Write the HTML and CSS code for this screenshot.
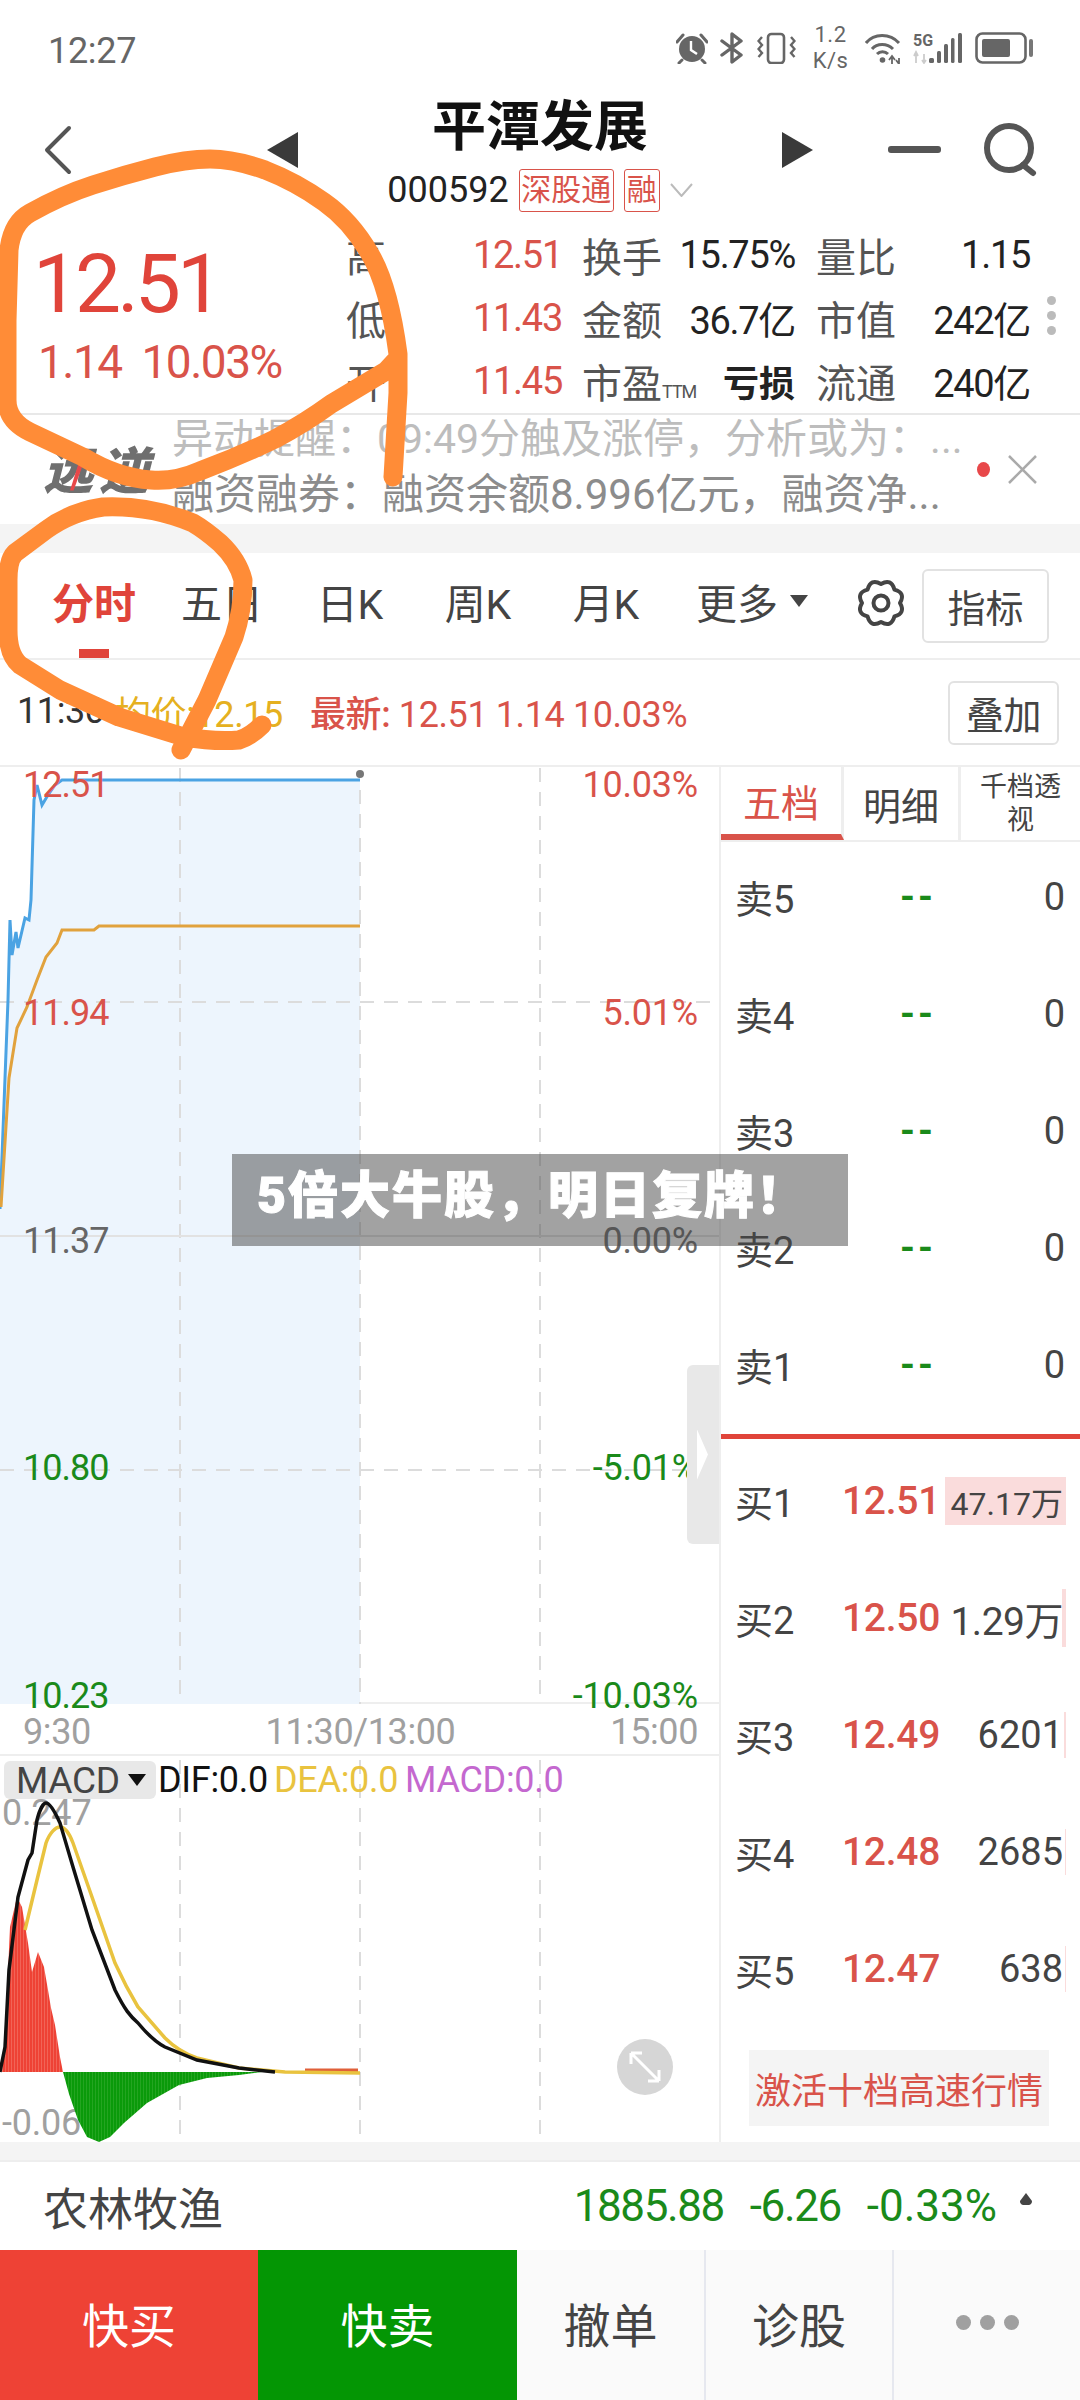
FILE: index.html
```html
<!DOCTYPE html>
<html lang="zh-CN">

<head>
  <meta charset="UTF-8" />
  <meta name="viewport" content="width=device-width, initial-scale=1.0" />
  <title>平潭发展</title>
  <link rel="stylesheet" href="styles.css">
</head>

<body>
  <div class="page">
    <div class="status">
      <span class="time">12:27</span>
      <div class="status-icons">
        <svg width="32" height="31" viewBox="0 0 32 31">
          <path d="M1 9 L7 2 M25 2 L31 9 M6 27 L3 30 M26 27 L29 30" stroke="#666" stroke-width="3" stroke-linecap="round" />
          <circle cx="16" cy="16" r="13" fill="#666" />
          <path d="M15 8 V17 L21 21" fill="none" stroke="#fff" stroke-width="2.4" />
        </svg>
        <svg width="25" height="32" viewBox="0 0 25 32">
          <path d="M2 9 L21 23 L12 30 V2 L21 9 L2 23" fill="none" stroke="#666" stroke-width="3.4" stroke-linejoin="round" stroke-linecap="round" />
        </svg>
        <svg width="39" height="32" viewBox="0 0 39 32">
          <rect x="11" y="2" width="16" height="29" rx="3.5" fill="none" stroke="#666" stroke-width="2.6" />
          <path d="M5 5 L1.5 9 L5 13 L1.5 17 L5 21 L1.5 25 M34 5 L37.5 9 L34 13 L37.5 17 L34 21 L37.5 25" fill="none" stroke="#666" stroke-width="2.4" />
        </svg>
        <div class="speed"><span>1.2</span><span>K/s</span></div>
        <svg width="36" height="32" viewBox="0 0 36 32">
          <path d="M1 11 C9 1 25 1 34 11 M7 17 C12 11 22 11 28 17 M12 22 C15 19 20 19 23 22" fill="none" stroke="#666" stroke-width="3" />
          <circle cx="17.5" cy="28" r="2.8" fill="#666" />
          <path d="M27 24 V32 M34 26 V32 M24 28 L27 24 L30 28 M31 28 L34 32" fill="none" stroke="#666" stroke-width="1.8" />
        </svg>
        <svg width="50" height="32" viewBox="0 0 50 32">
          <text x="0" y="14" class="net-text">5G</text>
          <path d="M3 20 V31 M11 22 V31 M1 24 L3 20 L5 24 M9 28 L11 31 L13 28" fill="none" stroke="#ccc" stroke-width="1.8" />
          <rect x="16" y="26" width="5" height="5" rx="1.5" fill="#666" />
          <rect x="24" y="19" width="4" height="12" rx="1.5" fill="#666" />
          <rect x="31" y="12" width="4" height="19" rx="1.5" fill="#666" />
          <rect x="38" y="6" width="3.5" height="25" rx="1.5" fill="#666" />
          <rect x="45" y="1" width="4" height="30" rx="1.5" fill="#666" />
        </svg>
        <svg width="58" height="32" viewBox="0 0 58 32">
          <rect x="1.5" y="1.5" width="49" height="29" rx="6" fill="none" stroke="#666" stroke-width="2.6" />
          <rect x="7" y="7" width="28" height="18" rx="2" fill="#666" />
          <rect x="54" y="7" width="4" height="18" rx="2" fill="#777" />
        </svg>
      </div>
    </div>

    <div class="head">
      <svg class="back" width="29" height="50" viewBox="0 0 29 50">
        <path d="M26 3 L4 25 L26 47" fill="none" stroke="#555" stroke-width="4" stroke-linecap="round" stroke-linejoin="round" />
      </svg>
      <span class="tri-left"></span>
      <div class="head-center">
        <div class="stock-name">平潭发展</div>
        <div class="stock-code">
          <span class="code-num">000592</span>
          <span class="tag tag-wide">深股通</span>
          <span class="tag">融</span>
          <svg width="23" height="14" viewBox="0 0 23 14">
            <path d="M1 1 L11.5 13 L22 1" fill="none" stroke="#bbb" stroke-width="2" />
          </svg>
        </div>
      </div>
      <span class="tri-right"></span>
      <span class="minus"></span>
      <svg class="search" width="54" height="54" viewBox="0 0 54 54">
        <circle cx="26" cy="25" r="22" fill="none" stroke="#555" stroke-width="6" />
        <path d="M40 42 L50 50" stroke="#555" stroke-width="6" stroke-linecap="round" />
      </svg>
    </div>

    <div class="quote">
      <div class="quote-main">
        <div class="quote-price">12.51</div>
        <div class="quote-change">1.14&nbsp;&nbsp;10.03%</div>
      </div>
      <div class="stats">
        <span class="stat-label">高</span><span class="stat-up">12.51</span>
        <span class="stat-label">换手</span><span class="stat-val">15.75%</span>
        <span class="stat-label">量比</span><span class="stat-val">1.15</span>

        <span class="stat-label">低</span><span class="stat-up">11.43</span>
        <span class="stat-label">金额</span><span class="stat-val">36.7亿</span>
        <span class="stat-label">市值</span><span class="stat-val">242亿</span>

        <span class="stat-label">开</span><span class="stat-up">11.45</span>
        <span class="stat-label">市盈<small class="ttm">TTM</small></span><span class="stat-val stat-bold">亏损</span>
        <span class="stat-label">流通</span><span class="stat-val">240亿</span>
      </div>
      <div class="more-dots"><i></i><i></i><i></i></div>
    </div>

    <div class="news">
      <div class="news-logo">远逆</div>
      <div class="news-text">
        <div class="news-line news-faded">异动提醒：09:49分触及涨停，分析或为：...</div>
        <div class="news-line">融资融券：融资余额8.996亿元，融资净...</div>
      </div>
      <span class="news-dot"></span>
      <svg width="31" height="31" viewBox="0 0 31 31">
        <path d="M2 2 L29 29 M29 2 L2 29" stroke="#aaa" stroke-width="2.5" />
      </svg>
    </div>

    <div class="gap gap-top"></div>

    <div class="tabs">
      <span class="tab tab-active">分时</span>
      <span class="tab">五日</span>
      <span class="tab">日K</span>
      <span class="tab">周K</span>
      <span class="tab">月K</span>
      <span class="tab tab-more">更多<i class="caret"></i></span>
      <svg class="gear" width="52" height="52" viewBox="0 0 52 52" fill="none" stroke="#444" stroke-width="4" stroke-linejoin="round">
        <circle cx="26" cy="26" r="7.5" />
        <path d="M26 7 Q36.3 1.1 39.4 12.6 Q50.9 15.7 45 26 Q50.9 36.3 39.4 39.4 Q36.3 50.9 26 45 Q15.7 50.9 12.6 39.4 Q1.1 36.3 7 26 Q1.1 15.7 12.6 12.6 Q15.7 1.1 26 7 Z" />
      </svg>
      <span class="outline-btn tab-btn">指标</span>
    </div>

    <div class="info">
      <span class="info-time">11:30</span>
      <span class="info-avg">均价:12.15</span>
      <span class="info-last"><b>最新:</b> 12.51 1.14 10.03%</span>
      <span class="outline-btn info-btn">叠加</span>
    </div>

    <div class="main">
      <div class="chart-col">
        <div class="plot">
          <svg class="plot-svg" width="719" height="937" viewBox="0 0 719 937">
            <g transform="translate(0,-767)">
              <path d="M0 1209 L8 1000 L10 920 L12 955 L16 932 L18 948 L25 918 L29 920 L31 900 L34 800 L37 785 L42 805 L48 795 L55 785 L62 780 L360 780 V1704 H0 Z" fill="#edf5fd" />
              <path d="M180 768 V1704 M360 790 V1704 M540 768 V1704 M0 1002 H720 M0 1470 H720" stroke="#dcdcdc" stroke-width="2" stroke-dasharray="14 10" fill="none" />
              <path d="M0 1236 H720" stroke="#e2e2e2" stroke-width="2" fill="none" />
              <path d="M0 1209 L8 1000 L10 920 L12 955 L16 932 L18 948 L25 918 L29 920 L31 900 L34 800 L37 785 L42 805 L48 795 L55 785 L62 780 L360 780" fill="none" stroke="#4ba3e3" stroke-width="3" />
              <path d="M1 1207 L9 1078 L17 1028 L27 1007 L37 980 L46 957 L57 943 L62 930 L94 930 L99 926 L360 926" fill="none" stroke="#e1a23d" stroke-width="3" />
              <circle cx="360" cy="774" r="4" fill="#777" />
            </g>
          </svg>
          <div class="axis">
            <div class="axis-row up"><span>12.51</span><span>10.03%</span></div>
            <div class="axis-row up"><span>11.94</span><span>5.01%</span></div>
            <div class="axis-row flat"><span>11.37</span><span>0.00%</span></div>
            <div class="axis-row down"><span>10.80</span><span>-5.01%</span></div>
            <div class="axis-row down"><span>10.23</span><span>-10.03%</span></div>
          </div>
          <div class="drawer"><i></i></div>
        </div>
        <div class="time-axis">
          <span>9:30</span><span>11:30/13:00</span><span>15:00</span>
        </div>
        <div class="macd">
          <span class="macd-max">0.247</span>
          <span class="macd-min">-0.06</span>
          <svg class="macd-svg" width="719" height="386" viewBox="0 0 719 386">
            <defs>
              <pattern id="redBars" width="3" height="10" patternUnits="userSpaceOnUse">
                <rect width="3" height="10" fill="#f47a6e" />
                <rect width="2.4" height="10" fill="#ee4235" />
              </pattern>
              <pattern id="greenBars" width="3" height="10" patternUnits="userSpaceOnUse">
                <rect width="3" height="10" fill="#35ad30" />
                <rect width="2.4" height="10" fill="#0a9a0a" />
              </pattern>
            </defs>
            <g transform="translate(0,-1756)">
              <path d="M180 1760 V2142 M360 1760 V2142 M540 1760 V2142" stroke="#dcdcdc" stroke-width="2" stroke-dasharray="14 10" fill="none" />
              <path d="M2 2072 L5 2033 L7 1993 L10 1927 L17 1897 L22 1907 L28 1943 L32 1972 L38 1952 L44 1967 L48 1990 L51 2008 L55 2025 L60 2057 L63 2072 Z" fill="url(#redBars)" />
              <path d="M63 2072 L69 2094 L78 2120 L87 2137 L99 2142 L110 2137 L124 2123 L147 2103 L179 2085 L207 2078 L239 2075 L262 2072 Z" fill="url(#greenBars)" />
              <path d="M305 2071 H358" stroke="#e0603a" stroke-width="5" fill="none" />
              <path d="M25 1930 L37 1880 L46 1843 C50 1832 56 1827 60 1827 C66 1827 70 1835 73 1843 L92 1897 L115 1963 C125 1985 132 1997 138 2007 L165 2038 C175 2048 185 2054 197 2058 L239 2068 L285 2072 L360 2073" fill="none" stroke="#e9c33f" stroke-width="3.5" />
              <path d="M0 2072 L5 2047 L9 1970 L18 1897 L28 1860 L32 1853 L37 1820 C40 1808 44 1803 46 1803 C50 1803 55 1812 60 1823 L73 1867 L92 1930 L115 1990 C125 2010 130 2016 138 2023 C148 2035 155 2042 165 2047 L197 2060 L239 2068 L275 2072" fill="none" stroke="#111" stroke-width="3.5" />
              <circle cx="645" cy="2067" r="28" fill="#d6d6d6" />
              <path d="M631 2053 L659 2081 M631 2053 H642 M631 2053 V2064 M659 2081 H648 M659 2081 V2070" stroke="#fff" stroke-width="3" fill="none" />
            </g>
          </svg>
          <div class="macd-legend">
            <span class="macd-btn">MACD<i class="caret caret-dark"></i></span>
            <span class="legend-dif">DIF:0.0</span>
            <span class="legend-dea">DEA:0.0</span>
            <span class="legend-macd">MACD:0.0</span>
          </div>
        </div>
      </div>

      <div class="book">
        <div class="book-tabs">
          <span class="book-tab book-tab-active">五档</span>
          <span class="book-tab">明细</span>
          <span class="book-tab book-tab-small">千档透视</span>
        </div>
        <div class="sell">
          <div class="row"><span>卖5</span><span class="dash">--</span><span class="qty">0</span></div>
          <div class="row"><span>卖4</span><span class="dash">--</span><span class="qty">0</span></div>
          <div class="row"><span>卖3</span><span class="dash">--</span><span class="qty">0</span></div>
          <div class="row"><span>卖2</span><span class="dash">--</span><span class="qty">0</span></div>
          <div class="row"><span>卖1</span><span class="dash">--</span><span class="qty">0</span></div>
        </div>
        <div class="buy">
          <div class="row"><span>买1</span><span class="price">12.51</span><span class="qty qty-small"><i class="bar" style="width: 121px"></i><em>47.17万</em></span></div>
          <div class="row"><span>买2</span><span class="price">12.50</span><span class="qty qty-mid"><i class="bar" style="width: 4px"></i><em>1.29万</em></span></div>
          <div class="row"><span>买3</span><span class="price">12.49</span><span class="qty"><i class="bar" style="width: 2px"></i><em>6201</em></span></div>
          <div class="row"><span>买4</span><span class="price">12.48</span><span class="qty"><i class="bar" style="width: 1px"></i><em>2685</em></span></div>
          <div class="row"><span>买5</span><span class="price">12.47</span><span class="qty"><i class="bar" style="width: 1px"></i><em>638</em></span></div>
        </div>
        <div class="activate">激活十档高速行情</div>
      </div>
    </div>

    <div class="gap gap-bottom"></div>

    <div class="sector">
      <span class="sector-name">农林牧渔</span>
      <div class="sector-nums">
        <span>1885.88</span><span>-6.26</span><span class="sector-pct">-0.33%</span>
        <svg width="14" height="12" viewBox="0 0 14 12">
          <path d="M7 0 L13 8 A4 4 0 0 1 10 12 H4 A4 4 0 0 1 1 8 Z" fill="#444" />
        </svg>
      </div>
    </div>

    <div class="actions">
      <span class="action action-buy">快买</span>
      <span class="action action-sell">快卖</span>
      <span class="action action-plain action-cancel">撤单</span>
      <span class="action action-plain action-diag">诊股</span>
      <span class="action action-plain action-dots"><i></i><i></i><i></i></span>
    </div>

    <div class="banner">5倍大牛股，明日复牌！</div>

    <svg class="scribble" width="1080" height="800" viewBox="0 0 1080 800">
      <path d="M393 477 L398 393 L398 354 Q389 286 370 254 Q351 221 324 202 Q296 182 265 170 Q234 159 210 159 Q186 159 155 167 Q124 175 93 185 Q62 195 30 213 Q12 223 9 250 L7 321 L7 400 Q7 421 30 432 L83 457 Q118 478 151 480 Q175 482 200 471 Q240 456 275 439 Q305 423 331 404 L386 371 L398 358" />
      <path d="M181 750 L207 700 L234 637 Q243 610 243 580 Q238 560 220 543 Q205 530 193 523 Q150 505 103 507 Q70 512 46 530 L15 553 Q8 560 8 580 L8 630 Q8 655 20 665 L60 690 L119 717 L184 737 Q215 742 239 740 Q250 737 262 725" />
    </svg>
  </div>
</body>

</html>
```

FILE: styles.css
```css
* {
  box-sizing: border-box;
}

body {
  margin: 0;
  background: #fff;
  font-family: Roboto, "Noto Sans CJK SC", sans-serif;
  color: #444;
}

i,
em {
  font-style: normal;
}

.page {
  position: relative;
  width: 1080px;
  height: 2400px;
  overflow: hidden;
  background: #fff;
}

/* status bar */
.status {
  display: flex;
  align-items: center;
  height: 90px;
  padding: 6px 47px 0 48px;
  color: #666;
}

.time {
  margin-top: 6px;
  font-size: 36px;
  letter-spacing: -0.3px;
}

.status-icons {
  display: flex;
  align-items: center;
  gap: 12px;
  margin-left: auto;
}

.speed {
  display: flex;
  flex-direction: column;
  align-items: center;
  width: 35px;
  margin: 0 5px;
  font-size: 22px;
  line-height: 26px;
  letter-spacing: 0.5px;
}

.net-text {
  font-size: 16px;
  font-weight: 700;
  fill: #666;
}

/* header */
.head {
  display: flex;
  align-items: flex-start;
  height: 125px;
  padding-left: 43px;
}

.back {
  flex: 0 0 auto;
  margin: 35px 195px 0 0;
}

.tri-left,
.tri-right {
  flex: 0 0 31px;
  height: 36px;
  margin-top: 42px;
  background: #3a3a3a;
}

.tri-left {
  clip-path: polygon(100% 0, 100% 100%, 0 50%);
}

.tri-right {
  clip-path: polygon(0 0, 100% 50%, 0 100%);
}

.head-center {
  flex: 0 0 484px;
  padding-top: 8px;
  text-align: center;
}

.stock-name {
  font-size: 54px;
  line-height: 60px;
  font-weight: 700;
  color: #111;
}

.stock-code {
  display: flex;
  align-items: center;
  justify-content: center;
  gap: 10px;
  height: 44px;
  margin-top: 10px;
}

.code-num {
  font-size: 36px;
  color: #222;
}

.tag {
  width: 36px;
  height: 43px;
  border: 1px solid #d9534a;
  border-radius: 3px;
  font-size: 30px;
  line-height: 40px;
  text-align: center;
  color: #d9534a;
}

.tag-wide {
  width: 95px;
}

.minus {
  flex: 0 0 53px;
  height: 7px;
  margin: 56px 42px 0 75px;
  border-radius: 3px;
  background: #555;
}

.search {
  flex: 0 0 auto;
  margin-top: 33px;
}

/* quote block */
.quote {
  position: relative;
  display: flex;
  height: 200px;
  padding: 8px 0 0 38px;
  border-bottom: 2px solid #e8e8e8;
}

.quote-main {
  flex: 0 0 308px;
}

.quote-price {
  margin: 16px 0 0 -5px;
  font-size: 82px;
  line-height: 90px;
  letter-spacing: -4px;
  color: #e0443a;
}

.quote-change {
  margin-top: 8px;
  font-size: 46px;
  line-height: 50px;
  letter-spacing: -1.5px;
  color: #d9534a;
}

.stats {
  display: grid;
  grid-template-columns: 127px 109px 80px 133px 21px 80px 134px;
  grid-auto-rows: 63px;
  align-items: center;
  font-size: 38px;
  letter-spacing: -1.3px;
}

.stat-label {
  font-size: 40px;
  letter-spacing: 0;
  color: #555;
  white-space: nowrap;
}

.stat-up {
  color: #d9534a;
}

.stat-val {
  color: #222;
  text-align: right;
}

/* every right-hand pair sits after a thin spacer column */
.stats > :nth-child(6n + 5) {
  grid-column: 6;
}

.stat-bold {
  font-size: 36px;
  font-weight: 700;
  letter-spacing: 0;
}

.ttm {
  font-size: 18px;
  letter-spacing: -1px;
}

.more-dots {
  position: absolute;
  top: 81px;
  right: 24px;
  display: flex;
  flex-direction: column;
  gap: 6px;
}

.more-dots i {
  width: 9px;
  height: 9px;
  border-radius: 50%;
  background: #bbb;
}

/* news strip */
.news {
  display: flex;
  align-items: center;
  height: 109px;
  padding-left: 43px;
}

.news-logo {
  position: relative;
  flex: 0 0 129px;
  margin-top: 4px;
  font-size: 50px;
  line-height: 42px;
  font-weight: 900;
  font-style: italic;
  letter-spacing: 6px;
  color: #6f6f6f;
  white-space: nowrap;
}

.news-logo::after {
  content: "";
  position: absolute;
  top: 0;
  left: 27px;
  width: 18px;
  height: 40px;
  background: #e8484a;
  clip-path: polygon(70% 0, 100% 0, 20% 100%, 0 100%);
}

.news-text {
  flex: 0 0 805px;
  padding-bottom: 6px;
  font-size: 42px;
  line-height: 56px;
  color: #8c8c8c;
}

.news-line {
  white-space: nowrap;
}

.news-faded {
  font-size: 41px;
  color: #bdbdbd;
}

.news-dot {
  flex: 0 0 13px;
  height: 15px;
  margin-right: 17px;
  border-radius: 50%;
  background: #e8484a;
}

.gap {
  background: #f4f4f4;
}

.gap-top {
  height: 29px;
}

.gap-bottom {
  height: 20px;
  border-bottom: 2px solid #eee;
}

/* period tabs */
.tabs {
  display: flex;
  align-items: center;
  height: 107px;
  padding-left: 30px;
  border-bottom: 2px solid #eee;
  font-size: 41px;
}

.tab {
  position: relative;
  flex: 0 0 128px;
  align-self: stretch;
  display: flex;
  align-items: center;
  justify-content: center;
  padding-bottom: 10px;
  color: #444;
}

.tab-active {
  font-size: 42px;
  font-weight: 700;
  color: #e0443a;
}

.tab-active::after {
  content: "";
  position: absolute;
  left: 49px;
  bottom: 0;
  width: 30px;
  height: 9px;
  background: #e0443a;
}

.tab-more {
  flex: 0 0 auto;
  margin-left: 26px;
}

.caret {
  width: 0;
  height: 0;
  margin-left: 12px;
  border-left: 9px solid transparent;
  border-right: 9px solid transparent;
  border-top: 12px solid #444;
}

.gear {
  flex: 0 0 auto;
  margin: 0 0 6px 47px;
}

.outline-btn {
  display: flex;
  align-items: center;
  justify-content: center;
  border: 2px solid #e2e2e2;
  border-radius: 6px;
  font-size: 38px;
  color: #444;
}

.tab-btn {
  flex: 0 0 127px;
  height: 74px;
  margin-left: 15px;
}

/* info line */
.info {
  display: flex;
  align-items: center;
  height: 107px;
  padding: 0 21px 4px 17px;
  border-bottom: 2px solid #eee;
  font-size: 36px;
  letter-spacing: -0.4px;
  white-space: nowrap;
}

.info-time {
  width: 98px;
  color: #333;
}

.info-avg {
  width: 195px;
  color: #e5b020;
}

.info-last {
  color: #d9534a;
}

.info-last b {
  font-weight: 500;
}

.info-btn {
  width: 111px;
  height: 64px;
  margin-left: auto;
  margin-top: 4px;
}

/* chart column */
.main {
  display: flex;
  height: 1375px;
}

.chart-col {
  flex: 0 0 719px;
}

.plot {
  position: relative;
  height: 937px;
  border-bottom: 2px solid #eee;
}

.plot-svg,
.macd-svg {
  display: block;
}

.axis {
  position: absolute;
  top: 2px;
  left: 23px;
  right: 21px;
  bottom: -10px;
  display: flex;
  flex-direction: column;
  justify-content: space-between;
  font-size: 36px;
  line-height: 32px;
  letter-spacing: -0.2px;
}

.axis-row {
  display: flex;
  justify-content: space-between;
}

.axis-row span:first-child {
  letter-spacing: -1px;
}

.up {
  color: #d9534a;
}

.flat {
  color: #666;
}

.down {
  color: #1a8a1a;
}

.drawer {
  position: absolute;
  top: 598px;
  right: 0;
  display: flex;
  align-items: center;
  width: 32px;
  height: 179px;
  padding-left: 10px;
  border-radius: 6px 0 0 6px;
  background: #e8e8e8;
}

.drawer i {
  width: 11px;
  height: 50px;
  background: #fff;
  clip-path: polygon(0 0, 100% 50%, 0 100%);
}

.time-axis {
  display: flex;
  align-items: center;
  height: 52px;
  padding: 6px 21px 0 23px;
  border-bottom: 2px solid #eee;
  font-size: 36px;
  line-height: 30px;
  letter-spacing: -0.4px;
  color: #a0a0a0;
}

.time-axis span {
  flex: 1;
  text-align: center;
  white-space: nowrap;
}

.time-axis span:first-child {
  text-align: left;
}

.time-axis span:last-child {
  text-align: right;
}

.macd {
  position: relative;
  height: 386px;
}

.macd-svg {
  position: relative;
}

.macd-legend {
  position: absolute;
  top: 3px;
  left: 4px;
  display: flex;
  align-items: center;
  font-size: 36px;
  letter-spacing: -0.3px;
}

.macd-btn {
  display: flex;
  align-items: center;
  width: 152px;
  height: 38px;
  padding-left: 12px;
  border-radius: 6px;
  background: #e8e8e8;
  font-size: 37px;
  color: #444;
}

.caret-dark {
  margin-left: 8px;
  border-top-color: #111;
}

.legend-dif {
  width: 116px;
  margin-left: 2px;
  color: #111;
}

.legend-dea {
  width: 131px;
  color: #e9c33f;
}

.legend-macd {
  color: #c468cf;
}

.macd-max,
.macd-min {
  position: absolute;
  left: 2px;
  font-size: 36px;
  line-height: 30px;
  letter-spacing: -0.2px;
  color: #a0a0a0;
}

.macd-max {
  top: 42px;
}

.macd-min {
  top: 352px;
}

/* order book */
.book {
  flex: 0 0 361px;
  border-left: 2px solid #eee;
}

.book-tabs {
  display: grid;
  grid-template-columns: 123px 117px 1fr;
  height: 75px;
  border-bottom: 2px solid #eee;
}

.book-tab {
  display: flex;
  align-items: center;
  justify-content: center;
  border-right: 3px solid #eee;
  font-size: 38px;
  color: #444;
}

.book-tab-active {
  border-bottom: 6px solid #d9534a;
  color: #d9534a;
}

.book-tab-small {
  width: 92px;
  margin: 0 auto;
  border: 0;
  font-size: 27px;
  line-height: 33px;
  text-align: center;
}

.sell {
  display: flow-root;
  height: 597px;
  border-bottom: 5px solid #e0443a;
}

.sell .row:first-child {
  margin-top: -4px;
}

.sell .qty {
  padding-right: 1px;
}

.buy {
  padding-top: 3px;
}

.row {
  display: grid;
  grid-template-columns: 107px 94px 1fr;
  align-items: center;
  height: 117px;
  padding: 0 14px;
  font-size: 38px;
}

.dash {
  font-weight: 700;
  letter-spacing: 3px;
  text-align: right;
  color: #1a8a1a;
}

.price {
  font-size: 39px;
  font-weight: 500;
  letter-spacing: -0.3px;
  color: #d9534a;
  white-space: nowrap;
}

.qty {
  position: relative;
  padding-right: 3px;
  text-align: right;
  white-space: nowrap;
}

.qty em {
  position: relative;
}

.qty-small {
  font-size: 32px;
}

.qty-mid {
  font-size: 39px;
  letter-spacing: -0.5px;
}

.bar {
  position: absolute;
  top: -1px;
  right: 0;
  bottom: -1px;
  background: #fadcdc;
}

.activate {
  display: flex;
  align-items: center;
  justify-content: center;
  width: 300px;
  height: 76px;
  margin: 23px 0 0 28px;
  background: #f4f4f4;
  font-size: 36px;
  color: #d9534a;
}

/* sector line */
.sector {
  display: flex;
  align-items: center;
  justify-content: space-between;
  height: 88px;
  padding: 0 47px 0 43px;
}

.sector-name {
  font-size: 45px;
  color: #444;
}

.sector-nums {
  display: flex;
  align-items: center;
  gap: 26px;
  font-size: 44px;
  letter-spacing: -1.4px;
  color: #1a8a1a;
}

.sector-pct {
  letter-spacing: 0;
}

.sector-nums svg {
  margin: 0 0 14px -4px;
}

/* bottom buttons */
.actions {
  display: flex;
  height: 150px;
  font-size: 47px;
}

.action {
  display: flex;
  align-items: center;
  justify-content: center;
  padding-bottom: 6px;
}

.action-buy {
  flex: 0 0 258px;
  background: #ee4235;
  color: #fff;
}

.action-sell {
  flex: 0 0 259px;
  background: #049604;
  color: #fff;
}

.action-plain {
  background: #fafafa;
  color: #444;
  border-right: 2px solid #e6e8ef;
}

.action-cancel {
  flex: 0 0 189px;
}

.action-diag {
  flex: 0 0 188px;
}

.action-dots {
  flex: 1;
  gap: 9px;
  border-right: 0;
}

.action-dots i {
  width: 15px;
  height: 15px;
  border-radius: 50%;
  background: #a0a0a0;
}

/* overlays */
.banner {
  position: absolute;
  top: 1154px;
  left: 232px;
  width: 616px;
  height: 92px;
  padding-left: 25px;
  background: rgba(70, 70, 70, 0.5);
  font-size: 50px;
  line-height: 84px;
  font-weight: 900;
  letter-spacing: 2px;
  -webkit-text-stroke: 1px #fff;
  color: #fff;
  white-space: nowrap;
}

.scribble {
  position: absolute;
  top: 0;
  left: 0;
  fill: none;
  stroke: #ff8c37;
  stroke-width: 19;
  stroke-linecap: round;
  stroke-linejoin: round;
}
```
